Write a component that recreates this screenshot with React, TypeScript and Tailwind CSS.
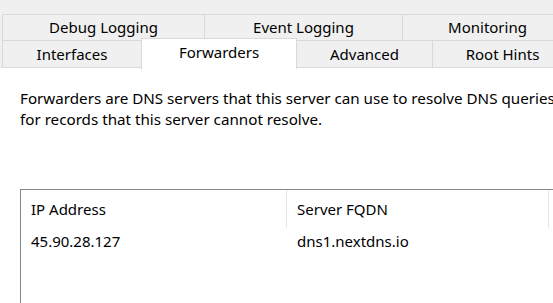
const font = { fontFamily: '"Noto Sans", "DejaVu Sans", sans-serif' };

const Tab = ({ label, className }: { label: string; className: string }) => (
  <div className={`flex items-center justify-center border-r border-[#d9d9d9] text-[15px] text-black ${className}`}>
    {label}
  </div>
);

export default function App() {
  return (
    <div className="w-[553px] h-[303px] overflow-hidden bg-white relative" style={font}>
      <div className="h-[14px] bg-[#f0f0f0]" />
      <div className="bg-[#f0f0f0]">
        <div className="flex h-[26px] ml-[2px] border-t border-l border-[#d9d9d9]">
          <Tab label="Debug Logging" className="w-[202px] shrink-0" />
          <Tab label="Event Logging" className="w-[198px] shrink-0" />
          <Tab label="Monitoring" className="w-[170px] shrink-0" />
        </div>
        <div className="flex h-[28px] ml-[2px] border-t border-l border-b border-[#d9d9d9]">
          <Tab label="Interfaces" className="w-[139px] shrink-0" />
          <div className="w-[155px] shrink-0" />
          <Tab label="Advanced" className="w-[136px] shrink-0" />
          <Tab label="Root Hints" className="w-[140px] shrink-0" />
        </div>
      </div>
      <div className="absolute left-[141px] top-[38px] w-[156px] h-[31px] bg-white border-t border-l border-r border-[#d9d9d9] flex justify-center pt-[2px] text-[15px] text-black">
        Forwarders
      </div>
      <div className="px-[20px] pt-[20px] text-[15.2px] leading-[21px] text-black whitespace-nowrap">
        <p>Forwarders are DNS servers that this server can use to resolve DNS queries</p>
        <p>for records that this server cannot resolve.</p>
      </div>
      <div className="ml-[20px] mt-[59px] border border-[#828790] h-[200px] w-[560px]">
        <div className="flex h-[38px] items-center text-[15px] text-black">
          <div className="w-[266px] pl-[10px] h-full flex items-center border-r border-[#e5e5e5]">IP Address</div>
          <div className="w-[262px] pl-[10px] h-full flex items-center border-r border-[#e5e5e5]">Server FQDN</div>
        </div>
        <div className="flex h-[26px] items-center text-[15px] text-black">
          <div className="w-[266px] pl-[10px]">45.90.28.127</div>
          <div className="w-[262px] pl-[10px]">dns1.nextdns.io</div>
        </div>
      </div>
    </div>
  );
}
